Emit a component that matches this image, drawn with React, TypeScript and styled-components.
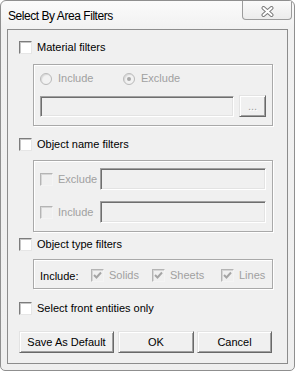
import styled, { createGlobalStyle } from 'styled-components';

const GlobalStyle = createGlobalStyle`
  html, body {
    margin: 0;
    padding: 0;
    background: #ffffff;
  }
  body {
    font-family: "Liberation Sans", Arial, sans-serif;
    font-size: 11px;
    color: #000;
  }
`;

const disabledText = '#a0a0a0';

const Window = styled.div`
  box-sizing: border-box;
  width: 295px;
  height: 371px;
  border: 1px solid #8f8f8f;
  border-radius: 6px 6px 5px 5px;
  background: linear-gradient(to bottom, #fbfbfb 0px, #f1f1f1 28px, #efefef 100%);
  padding: 0 6px 6px 6px;
  display: flex;
  flex-direction: column;
  overflow: hidden;
`;

const TitleBar = styled.div`
  height: 28px;
  display: flex;
  align-items: flex-start;
  justify-content: space-between;
  margin-right: -4px;
`;

const Title = styled.div`
  font-size: 12px;
  letter-spacing: -0.45px;
  line-height: 14px;
  padding: 8px 0 0 1px;
  color: #000;
`;

const CloseButton = styled.div`
  box-sizing: border-box;
  width: 50px;
  height: 19px;
  border: 1px solid #9c9c9c;
  border-top: none;
  border-radius: 0 0 4px 4px;
  background: linear-gradient(to bottom, #fafafa, #ececec);
  display: flex;
  align-items: center;
  justify-content: center;
  padding-top: 2px;
`;

const Client = styled.div`
  box-sizing: border-box;
  width: 281px;
  height: 335px;
  border: 1px solid #8c8c8c;
  background: #f0f0f0;
  padding: 11px 0 0 11px;
  display: flex;
  flex-direction: column;
`;

const CheckRow = styled.div<{ $mt?: number }>`
  display: flex;
  align-items: center;
  height: 13px;
  margin-top: ${(p) => p.$mt ?? 0}px;
`;

const Caption = styled.span<{ $disabled?: boolean }>`
  margin-left: 5px;
  line-height: 13px;
  white-space: nowrap;
  color: ${(p) => (p.$disabled ? disabledText : '#000')};
`;

const Box = styled.span<{ $disabled?: boolean }>`
  box-sizing: border-box;
  flex: none;
  width: 13px;
  height: 13px;
  border: 1px solid;
  border-color: ${(p) => (p.$disabled ? '#b4b4b4 #f4f4f4 #f4f4f4 #b4b4b4' : '#7c7c7c #e6e6e6 #e6e6e6 #7c7c7c')};
  box-shadow: inset 1px 1px 0 ${(p) => (p.$disabled ? '#d6d6d6' : '#c6c6c6')};
  background: ${(p) => (p.$disabled ? '#f0f0f0' : '#ffffff')};
  display: flex;
  align-items: center;
  justify-content: center;
`;

const RadioCircle = styled.span`
  box-sizing: border-box;
  flex: none;
  width: 12px;
  height: 12px;
  margin-right: 1px;
  border-radius: 50%;
  border: 1px solid #b9b9b9;
  background: #f2f2f2;
  box-shadow: inset 1px 1px 1px #d8d8d8;
  display: flex;
  align-items: center;
  justify-content: center;
`;

const RadioDot = styled.span`
  width: 4px;
  height: 4px;
  border-radius: 50%;
  background: #a8a8a8;
`;

const GroupBox = styled.div<{ $mt: number; $pt: number; $pb: number }>`
  box-sizing: border-box;
  width: 240px;
  margin: ${(p) => p.$mt}px 0 0 14px;
  padding: ${(p) => p.$pt}px 6px ${(p) => p.$pb}px 6px;
  border: 1px solid #a9a9a9;
  box-shadow: inset 1px 1px 0 #ffffff, 1px 1px 0 #ffffff;
  display: flex;
  flex-direction: column;
`;

const RadioRow = styled.div`
  display: grid;
  grid-template-columns: 83px auto;
  height: 13px;
`;

const Option = styled.div`
  display: flex;
  align-items: center;
`;

const FieldRow = styled.div<{ $mt: number }>`
  display: flex;
  align-items: flex-end;
  gap: 5px;
  margin-top: ${(p) => p.$mt}px;
  height: 22px;
`;

const TextField = styled.div<{ $w: number; $h: number }>`
  box-sizing: border-box;
  width: ${(p) => p.$w}px;
  height: ${(p) => p.$h}px;
  background: #f0f0f0;
  border: 1px solid;
  border-color: #a0a0a0 #ffffff #ffffff #a0a0a0;
  box-shadow: inset 1px 1px 0 #6e6e6e, inset -1px -1px 0 #e3e3e3;
`;

const NameRow = styled.div`
  display: grid;
  grid-template-columns: 60px 166px;
  align-items: center;
  height: 22px;
`;

const NameRows = styled.div`
  display: flex;
  flex-direction: column;
  gap: 11px;
`;

const TypeRow = styled.div`
  display: grid;
  grid-template-columns: 51px 61px 69px auto;
  align-items: center;
  height: 13px;
`;

const Button = styled.div<{ $w: number; $ml?: number; $disabled?: boolean }>`
  box-sizing: border-box;
  width: ${(p) => p.$w}px;
  height: 22px;
  margin-left: ${(p) => p.$ml ?? 0}px;
  background: #f0f0f0;
  border: 1px solid;
  border-color: #e3e3e3 #696969 #696969 #e3e3e3;
  box-shadow: inset 1px 1px 0 #ffffff, inset -1px -1px 0 #a0a0a0;
  display: flex;
  align-items: center;
  justify-content: center;
  white-space: nowrap;
  color: ${(p) => (p.$disabled ? disabledText : '#000')};
  text-shadow: ${(p) => (p.$disabled ? '1px 1px 0 #ffffff' : 'none')};
`;

const ButtonRow = styled.div`
  display: flex;
  margin-top: 16px;
`;

function Check({ disabled, checked }: { disabled?: boolean; checked?: boolean }) {
  return (
    <Box $disabled={disabled}>
      {checked && (
        <svg width="9" height="9" viewBox="0 0 9 9">
          <path d="M1 4 L3.5 6.5 L8 1.5" fill="none" stroke="#a5a5a5" strokeWidth="2" />
        </svg>
      )}
    </Box>
  );
}

function Radio({ checked }: { checked?: boolean }) {
  return <RadioCircle>{checked && <RadioDot />}</RadioCircle>;
}

export default function App() {
  return (
    <>
      <GlobalStyle />
      <Window>
        <TitleBar>
          <Title>Select By Area Filters</Title>
          <CloseButton>
            <svg width="13" height="11" viewBox="0 0 13 11">
              <path d="M2.5 2 L10.5 9 M10.5 2 L2.5 9" stroke="#7d7d7d" strokeWidth="4" strokeLinecap="round" />
              <path d="M2.5 2 L10.5 9 M10.5 2 L2.5 9" stroke="#ffffff" strokeWidth="2" strokeLinecap="round" />
            </svg>
          </CloseButton>
        </TitleBar>
        <Client>
          <CheckRow>
            <Check />
            <Caption>Material filters</Caption>
          </CheckRow>
          <GroupBox $mt={10} $pt={7} $pb={8}>
            <RadioRow>
              <Option>
                <Radio />
                <Caption $disabled>Include</Caption>
              </Option>
              <Option>
                <Radio checked />
                <Caption $disabled>Exclude</Caption>
              </Option>
            </RadioRow>
            <FieldRow $mt={10}>
              <TextField $w={194} $h={21} />
              <Button $w={27} $disabled>...</Button>
            </FieldRow>
          </GroupBox>

          <CheckRow $mt={12}>
            <Check />
            <Caption>Object name filters</Caption>
          </CheckRow>
          <GroupBox $mt={9} $pt={7} $pb={8}>
            <NameRows>
              <NameRow>
                <Option>
                  <Check disabled />
                  <Caption $disabled>Exclude</Caption>
                </Option>
                <TextField $w={166} $h={22} />
              </NameRow>
              <NameRow>
                <Option>
                  <Check disabled />
                  <Caption $disabled>Include</Caption>
                </Option>
                <TextField $w={166} $h={22} />
              </NameRow>
            </NameRows>
          </GroupBox>

          <CheckRow $mt={6}>
            <Check />
            <Caption>Object type filters</Caption>
          </CheckRow>
          <GroupBox $mt={8} $pt={9} $pb={6}>
            <TypeRow>
              <span>Include:</span>
              <Option>
                <Check disabled checked />
                <Caption $disabled>Solids</Caption>
              </Option>
              <Option>
                <Check disabled checked />
                <Caption $disabled>Sheets</Caption>
              </Option>
              <Option>
                <Check disabled checked />
                <Caption $disabled>Lines</Caption>
              </Option>
            </TypeRow>
          </GroupBox>

          <CheckRow $mt={13}>
            <Check />
            <Caption>Select front entities only</Caption>
          </CheckRow>

          <ButtonRow>
            <Button $w={95}>Save As Default</Button>
            <Button $w={76} $ml={4}>OK</Button>
            <Button $w={75} $ml={3}>Cancel</Button>
          </ButtonRow>
        </Client>
      </Window>
    </>
  );
}
